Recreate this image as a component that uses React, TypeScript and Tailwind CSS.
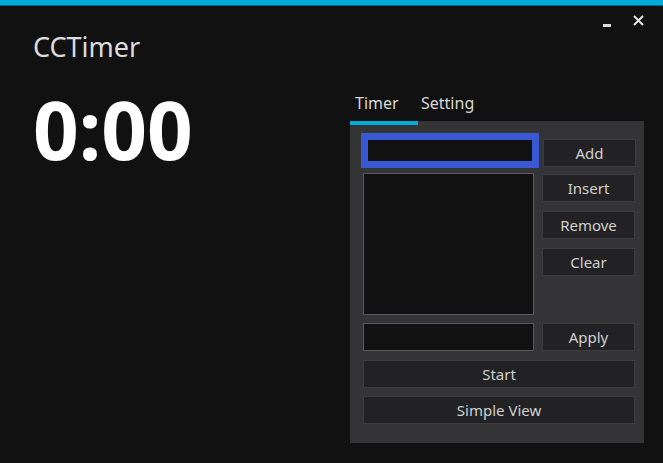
function Btn({ label, className = '' }: { label: string; className?: string }) {
  return (
    <button
      type="button"
      className={`h-[28px] shrink-0 bg-[#222224] border border-[#3c3c3e] text-[#d0d0d0] text-[15px] leading-none flex items-center justify-center ${className}`}
    >
      {label}
    </button>
  );
}

export default function App() {
  return (
    <div
      className="w-[663px] h-[463px] bg-[#111111] flex flex-col overflow-hidden"
      style={{ fontFamily: '"Noto Sans", "Open Sans", sans-serif' }}
    >
      {/* Accent bar */}
      <div className="h-[6px] bg-[#00abd9] border-b border-[#0a6b8a] shrink-0" />

      {/* Window controls */}
      <div className="flex justify-end items-center gap-[22px] pr-[19px] pt-[7px] h-[22px] text-[#dddddd]">
        <span className="w-[8px] h-[3px] bg-[#dddddd] mt-[9px]" />
        <svg width="11" height="11" viewBox="0 0 11 11">
          <path d="M1 1L10 10M10 1L1 10" stroke="#e5e5e5" strokeWidth="2" />
        </svg>
      </div>

      <div className="flex flex-1">
        {/* Left */}
        <div className="w-[350px] pl-[33px] flex flex-col">
          <div className="text-[27px] text-[#dcdcdc] leading-none mt-[5px]">CCTimer</div>
          <div className="text-[80px] font-bold text-white leading-none mt-[29px]">0:00</div>
        </div>

        {/* Right */}
        <div className="flex flex-col w-[294px] mt-[67px]">
          <div className="flex text-[16px] text-[#d8d8d8] leading-none h-[26px]">
            <div className="w-[68px] pl-[5px]">Timer</div>
            <div className="pl-[3px]">Setting</div>
          </div>
          <div className="bg-[#343436] h-[322px] flex flex-col pl-[11px] pr-[9px]">
            <div className="h-[4px] w-[68px] -ml-[11px] bg-[#00abd9]" />
            <div className="flex gap-[4px] mt-[8px]">
              <div className="w-[178px] h-[35px] shrink-0 border-[7px] border-[#3a58d4] bg-[#111111]" />
              <Btn label="Add" className="w-[93px] mt-[6px]" />
            </div>
            <div className="flex gap-[8px] mt-[5px] pl-[2px]">
              <div className="w-[171px] h-[142px] shrink-0 bg-[#111111] border border-[#5a5a5c]" />
              <div className="flex flex-col gap-[9px] pt-[1px]">
                <Btn label="Insert" className="w-[93px]" />
                <Btn label="Remove" className="w-[93px]" />
                <Btn label="Clear" className="w-[93px]" />
              </div>
            </div>
            <div className="flex gap-[8px] mt-[8px] pl-[2px]">
              <div className="w-[171px] h-[28px] shrink-0 bg-[#111111] border border-[#5a5a5c]" />
              <Btn label="Apply" className="w-[93px]" />
            </div>
            <div className="flex flex-col gap-[8px] mt-[9px] pl-[2px]">
              <Btn label="Start" className="w-[272px]" />
              <Btn label="Simple View" className="w-[272px]" />
            </div>
          </div>
        </div>
      </div>
    </div>
  );
}
